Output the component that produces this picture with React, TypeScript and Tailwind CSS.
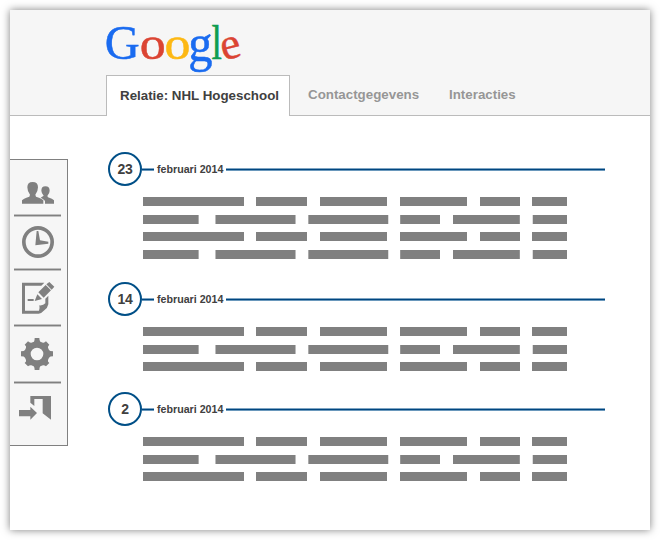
import type { ReactNode } from 'react';

const rowA = [
  'w-[101px]',
  'ml-3 w-[51px]',
  'ml-[13px] w-[67px]',
  'ml-[13px] w-[67px]',
  'ml-[13px] w-10',
  'ml-3 w-[35px]',
];
const rowB = [
  'w-14 border-r border-[#b0b0b0]',
  'ml-4 w-[81px] border-x border-[#bcbcbc]',
  'ml-3 w-[81px] border-x border-l-[#aaaaaa] border-r-[#dedede]',
  'ml-[11px] w-10 border-l border-[#969696]',
  'ml-[13px] w-[67px] border-r border-[#969696]',
  'ml-3 w-[35px] border-l border-[#dedede]',
];

function Bars({ items, gap = '' }: { items: string[]; gap?: string }) {
  return (
    <div className={`flex h-[9px] ${gap}`}>
      {items.map((c, i) => (
        <div key={i} className={`h-full shrink-0 bg-[#808080] ${c}`} />
      ))}
    </div>
  );
}

function Line({ className }: { className: string }) {
  return <div className={`h-[3px] border-y border-t-[#7fa5c3] border-b-[#6a98bc] bg-[#004680] ${className}`} />;
}

function Entry({ day, four, className }: { day: string; four?: boolean; className: string }) {
  return (
    <section className={className}>
      <div className="flex h-[34px] items-center">
        <div className="flex size-[34px] items-center justify-center rounded-full border-2 border-[#004f87] text-sm font-bold tracking-[-0.4px] text-[#404040]">
          {day}
        </div>
        <Line className="w-3" />
        <span className="ml-[3px] w-[69px] whitespace-nowrap text-[10.67px] font-bold leading-4 text-[#404040]">
          februari 2014
        </span>
        <Line className="w-[379px]" />
      </div>
      <div className="ml-[35px] mt-[11px]">
        <Bars items={rowA} />
        <Bars items={rowB} gap="mt-[9px]" />
        <Bars items={rowA} gap="mt-2" />
        {four && <Bars items={rowB} gap="mt-[9px]" />}
      </div>
    </section>
  );
}

function Logo() {
  return (
    <svg
      className="ml-[94px] mt-[11px] block shrink-0 overflow-visible"
      width="140"
      height="54"
      viewBox="104 21 140 54"
      fontFamily="'Liberation Serif', serif"
      fontSize="50"
      strokeWidth="0.5"
      role="img"
      aria-label="Google"
    >
      <text transform="translate(104.8 59.3) scale(.97 .99)" fill="#1a6bf0" stroke="#1a6bf0">G</text>
      <text transform="translate(139.8 58.9) scale(1.04 .94)" fill="#db4433" stroke="#db4433">o</text>
      <text transform="translate(164.6 58.9) scale(1.04 .94)" fill="#fdb813" stroke="#fdb813">o</text>
      <text transform="translate(188.2 61.4) scale(.97 1.04)" fill="#1a6bf0" stroke="#1a6bf0">g</text>
      <text transform="translate(211.6 59) scale(.75 .95)" fill="#0f9d50" stroke="#0f9d50">l</text>
      <text transform="translate(223.4 60.6) rotate(-14) scale(.9 .89)" fill="#db4433" stroke="#db4433">e</text>
    </svg>
  );
}

function Icon({ children, box, className }: { children: ReactNode; box: string; className: string }) {
  return (
    <svg viewBox={box} className={`block shrink-0 fill-[#808080] ${className}`}>
      {children}
    </svg>
  );
}

function Divider({ className }: { className: string }) {
  return <div className={`ml-1 h-[3px] w-[47px] shrink-0 border-y border-[#c0c0c0] bg-[#808080] ${className}`} />;
}

function Sidebar() {
  return (
    <nav className="flex h-[287px] w-[58px] flex-col border-y border-r border-[#808080] bg-[#f6f6f6]">
      <Icon box="60 90 108 78" className="ml-[10px] mt-5 h-[26px] w-9">
        <path d="M66 161V151Q68 147 88 140L90 134Q82 124 82 112Q82 96 98 96Q114 96 114 112Q114 124 106 134L108 140Q128 147 130 151V161Z" />
        <path d="M122 143L131 137Q124 128 124 122Q124 109 136 109Q149 109 149 122Q149 130 142 138L144 142Q158 147 162 151V161H135V154Q134 149 122 143Z" />
      </Icon>
      <Divider className="mt-2" />
      <Icon box="60 222 108 108" className="ml-[10px] mt-[7px] size-9">
        <circle cx="114" cy="276" r="42.5" fill="none" stroke="#808080" strokeWidth="11" />
        <path d="M110 243H115L120 271L145 275V281L106 286Z" />
      </Icon>
      <Divider className="mt-2" />
      <Icon box="60 120 108 108" className="ml-[10px] mt-[9px] size-9">
        <path d="M66 128H133L124 137H75V212H117Q120 207 118 196Q130 197 136 190V176L145 167V193Q143 204 133 211Q124 221 116 221H66Z" />
        <path d="M83 177H101V183H83ZM112 163L126 177L104 183ZM115 157L137 135L153 151L131 173ZM139 133L148 126L163 140L155 149Z" />
      </Icon>
      <Divider className="mt-2" />
      <Icon box="57 48 108 108" className="ml-[9px] mt-[9px] size-9">
        <path
          fillRule="evenodd"
          d="M102 65Q104 62 104 54H118Q118 62 121 65L129 68Q133 69 138 64L148 74Q143 79 144 83L147 90Q149 94 159 94V109Q150 109 147 113L144 120Q142 124 148 129L138 139Q132 134 129 136L121 139Q118 142 118 150H104Q104 142 101 139L94 136Q90 134 84 139L74 129Q80 124 78 120L75 113Q73 109 63 109V94Q73 94 75 90L78 83Q80 79 74 74L84 64Q89 69 94 68ZM111 83A19 19 0 1 0 111 121A19 19 0 1 0 111 83Z"
        />
      </Icon>
      <Divider className="mt-[9px]" />
      <Icon box="54 219 108 84" className="ml-2 mt-[9px] h-7 w-9">
        <path d="M91 228H153V299L128 280V237H103V258L91 248ZM57 270H91V260L111 279L91 299V289H57Z" />
      </Icon>
    </nav>
  );
}

export default function App() {
  return (
    <div className="h-[540px] w-[660px] bg-white p-[10px] font-['Liberation_Sans',Arial,sans-serif]">
      <div className="h-[520px] w-[640px] bg-white shadow-[0_0_8px_rgba(0,0,0,0.5)]">
        <header className="flex h-[106px] flex-col border-b border-[#bbbbbb] bg-[#f6f6f6]">
          <Logo />
          <div className="ml-24 flex h-[41px] shrink-0 text-[13.33px] font-bold leading-[40px] text-[#969696]">
            <div className="h-[41px] w-[184px] shrink-0 whitespace-nowrap border-x border-t border-[#bbbbbb] bg-white pl-[13px] text-[#404040]">
              Relatie: NHL Hogeschool
            </div>
            <div className="ml-[18px] w-[141px]">Contactgegevens</div>
            <div>Interacties</div>
          </div>
        </header>
        <main className="flex">
          <div className="mt-[43px]">
            <Sidebar />
          </div>
          <div className="ml-10 mt-9">
            <Entry day="23" four className="h-[130px]" />
            <Entry day="14" className="h-[110px]" />
            <Entry day="2" className="h-[110px]" />
          </div>
        </main>
      </div>
    </div>
  );
}
